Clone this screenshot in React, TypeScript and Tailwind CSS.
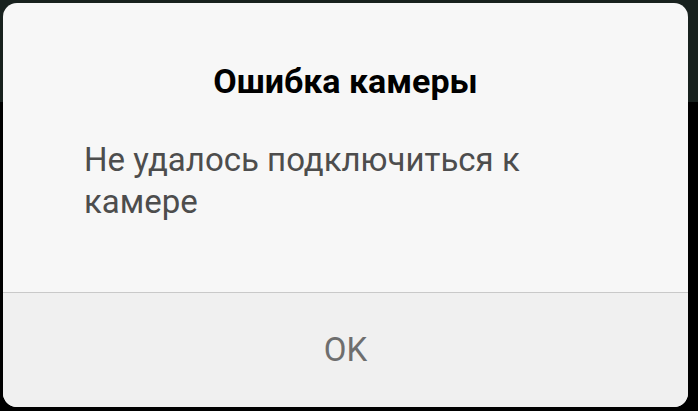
export default function App() {
  return (
    <div className="relative w-[698px] h-[411px] overflow-hidden bg-black" style={{ fontFamily: "Roboto, 'Noto Sans', sans-serif" }}>
      {/* screen behind the dialog: dark status/app bar over a black viewfinder */}
      <div className="h-[102px] bg-[#18211e]" />
      <div className="absolute left-[3px] top-[3px] w-[685px] h-[404px] rounded-[14px] overflow-hidden flex flex-col bg-[#f7f7f7]">
        <div className="h-[289px] flex flex-col">
          <h1 className="pt-[58px] text-center text-[34px] leading-[40px] font-bold text-black">Ошибка камеры</h1>
          <p className="mt-[38px] px-[81px] text-[33px] leading-[42px] text-[#4d4d4d]">
            Не удалось подключиться к камере
          </p>
        </div>
        <div className="h-px bg-[#c9c9c9]" />
        <div className="flex-1 bg-[#f0f0f0] flex items-center justify-center">
          <span className="text-[33px] text-[#6e6e6e]">OK</span>
        </div>
      </div>
    </div>
  );
}
